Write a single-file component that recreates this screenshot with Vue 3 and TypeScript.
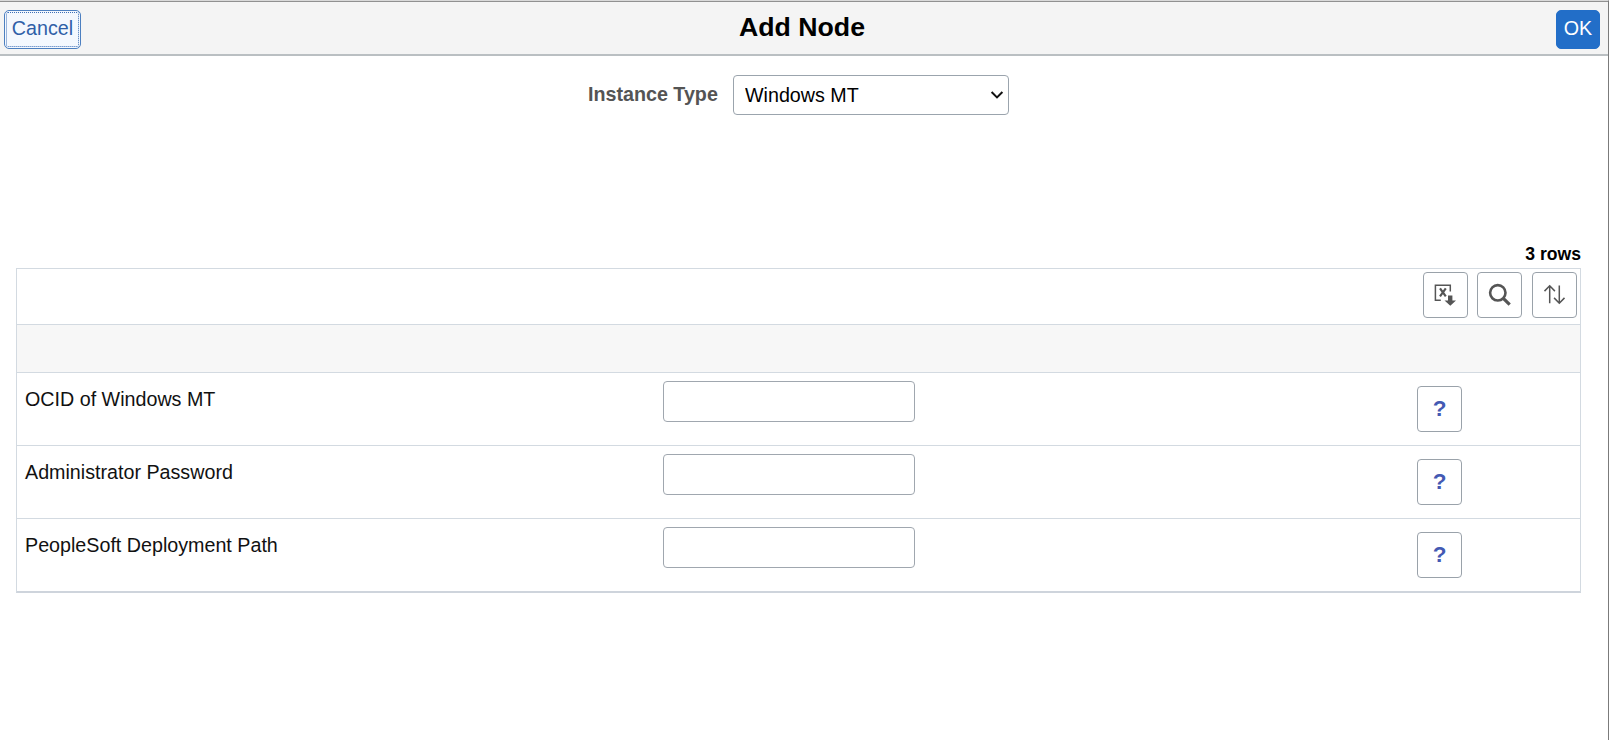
<script setup lang="ts">
import { ref } from 'vue'

interface NodeField {
  id: string
  label: string
  value: string
}

const instanceType = ref<string>('Windows MT')
const fields = ref<NodeField[]>([
  { id: 'ocid', label: 'OCID of Windows MT', value: '' },
  { id: 'password', label: 'Administrator Password', value: '' },
  { id: 'path', label: 'PeopleSoft Deployment Path', value: '' },
])
</script>

<template>
  <div class="modal">
    <header class="header">
      <button class="btn cancel" type="button"><span>Cancel</span></button>
      <h1 class="title">Add Node</h1>
      <button class="btn ok" type="button">OK</button>
    </header>

    <div class="type-row">
      <label class="type-label" for="instance-type">Instance Type</label>
      <div class="select-wrap">
        <select id="instance-type" v-model="instanceType" class="select">
          <option>Windows MT</option>
        </select>
        <svg class="chevron" width="14" height="10" viewBox="0 0 14 10">
          <path d="M1.6 2 L7 7.4 L12.4 2" fill="none" stroke="#111" stroke-width="2" />
        </svg>
      </div>
    </div>

    <div class="count">{{ fields.length }} rows</div>

    <section class="grid">
      <div class="toolbar">
        <button class="icon-btn" type="button" aria-label="Export">
          <svg width="24" height="24" viewBox="0 0 24 24">
            <path d="M16.3 8.5V2.3H1.4v15h5.4" fill="none" stroke="#555" stroke-width="1.5" />
            <path d="M6 5.4l5.8 8M11.8 5.4l-5.8 8" fill="none" stroke="#555" stroke-width="2.2" />
            <path d="M14 12.4h4.4v5h3.6L16.3 22.8 10.5 17.4h3.5z" fill="#555" />
          </svg>
        </button>
        <button class="icon-btn" type="button" aria-label="Find">
          <svg width="24" height="24" viewBox="0 0 24 24">
            <circle cx="9.8" cy="9.8" r="7.7" fill="none" stroke="#555" stroke-width="2.6" />
            <path d="M15.3 15.3l6.4 6.4" fill="none" stroke="#555" stroke-width="3.2" />
          </svg>
        </button>
        <button class="icon-btn" type="button" aria-label="Sort">
          <svg width="24" height="24" viewBox="0 0 24 24">
            <path d="M6.7 20.3V3M1.5 8.1l5.2-5.3 5.2 5.3M16.3 2.5V20M11.1 14.9l5.2 5.3 5.2-5.3" fill="none" stroke="#555" stroke-width="1.5" />
          </svg>
        </button>
      </div>
      <div class="band"></div>
      <div v-for="field in fields" :key="field.id" class="row">
        <label class="name" :for="field.id">{{ field.label }}</label>
        <input :id="field.id" v-model="field.value" class="input" type="text" />
        <button class="icon-btn help" type="button">?</button>
      </div>
    </section>
  </div>
</template>

<style>
body {
  margin: 0;
  background: #fff;
}
</style>

<style scoped>
.modal {
  box-sizing: border-box;
  width: 1609px;
  height: 740px;
  overflow: hidden;
  border-top: 1px solid #d9d9d9;
  border-right: 1px solid #7b7b7b;
  background: #fff;
  color: #111;
  font: 19.7px/24px "Liberation Sans", Arial, sans-serif;
}
.header {
  box-sizing: border-box;
  display: flex;
  justify-content: space-between;
  align-items: flex-start;
  height: 55px;
  padding: 8px 8px 0 4px;
  background: #f4f4f4;
  border-top: 1px solid #919191;
  border-bottom: 2px solid #babfc2;
}
.btn {
  box-sizing: border-box;
  height: 39px;
  padding: 0;
  border-radius: 5px;
  font: inherit;
}
.cancel {
  display: flex;
  width: 77px;
  padding: 1px;
  border: 1px solid #4c7fc0;
  background: #f4f8fe;
  color: #2f5fa8;
}
.cancel span {
  box-sizing: border-box;
  flex: 1;
  height: 35px;
  border: 1px dotted #3e70b8;
  border-radius: 2px;
  line-height: 31px;
}
.title {
  margin: 3px 0 0 -33px;
  color: #000;
  font-size: 26.7px;
  line-height: 28px;
}
.ok {
  width: 44px;
  border: 1px solid #226ec8;
  background: #226ec8;
  color: #fff;
  line-height: 33px;
  padding-bottom: 2px;
}
.type-row {
  display: flex;
  margin: 19px 0 0 588px;
}
.type-label {
  width: 145px;
  color: #545454;
  font-weight: bold;
  line-height: 38px;
}
.select-wrap {
  position: relative;
}
.select {
  display: block;
  box-sizing: border-box;
  width: 276px;
  height: 40px;
  padding: 0 11px;
  border: 1px solid #9ba4ad;
  border-radius: 4px;
  background: #fff;
  color: #000;
  font: inherit;
  appearance: none;
}
.chevron {
  position: absolute;
  right: 5px;
  top: 15px;
}
.count {
  margin: 127px 27px 0 0;
  height: 26px;
  color: #000;
  font-size: 17.6px;
  font-weight: bold;
  line-height: 24px;
  text-align: right;
}
.grid {
  box-sizing: border-box;
  width: 1565px;
  margin-left: 16px;
  border: 1px solid #d3dae1;
  border-bottom: 2px solid #ced4dc;
}
.toolbar {
  display: flex;
  justify-content: flex-end;
  gap: 10px;
  height: 52px;
  padding: 3px 3px 0 0;
}
.icon-btn {
  box-sizing: border-box;
  display: flex;
  align-items: center;
  justify-content: center;
  width: 45px;
  height: 46px;
  padding: 0;
  border: 1px solid #9aa2aa;
  border-radius: 4px;
  background: #fff;
}
.toolbar .icon-btn:first-child {
  margin-right: -1px;
}
.band {
  height: 47px;
  border-top: 1px solid #d3dae1;
  background: #f7f7f7;
}
.row {
  box-sizing: border-box;
  display: grid;
  grid-template-columns: 638px 754px 1fr;
  align-items: start;
  height: 73px;
  padding-left: 8px;
  border-top: 1px solid #d3dae1;
}
.name {
  padding-top: 14px;
}
.input {
  box-sizing: border-box;
  width: 252px;
  height: 41px;
  margin-top: 8px;
  border: 1px solid #a0a7af;
  border-radius: 4px;
  background: #fff;
  font: inherit;
}
.help {
  margin-top: 13px;
  color: #4459b3;
  font: bold 22.5px/24px "Liberation Sans", Arial, sans-serif;
}
</style>
